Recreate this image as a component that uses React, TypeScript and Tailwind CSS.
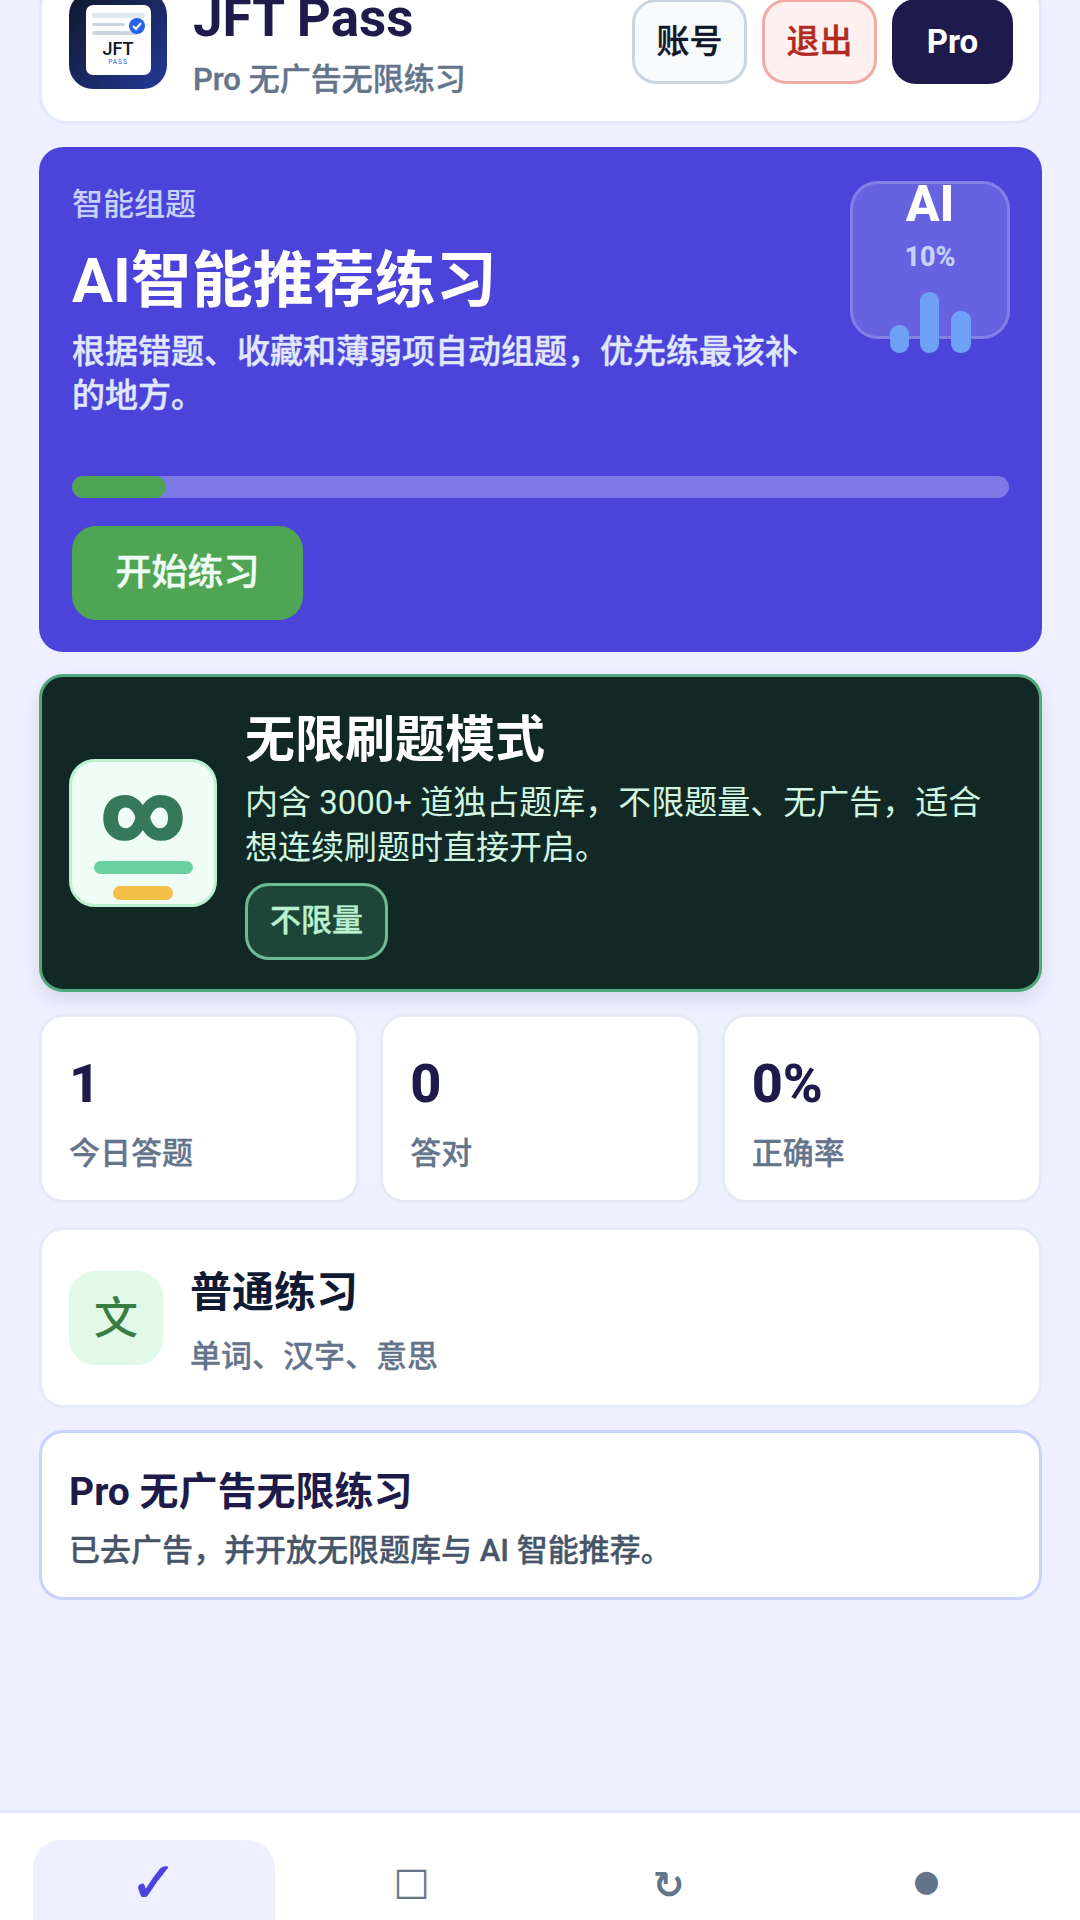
import React from "react";

function Logo() {
  return (
    <div className="relative w-[98px] h-[98px] shrink-0 rounded-[24px] bg-gradient-to-br from-[#0f172a] to-[#25399a] flex items-center justify-center">
      <svg width="65" height="70" viewBox="0 0 65 70">
        <rect width="65" height="70" rx="7" fill="#fff" />
        <rect x="6" y="8" width="53" height="5" rx="2" fill="#e2e8f0" />
        <rect x="6" y="18" width="33" height="3" rx="1.5" fill="#cbd5e1" />
        <rect x="6" y="26" width="46" height="4" rx="2" fill="#cbd5e1" />
        <circle cx="51" cy="21" r="8" fill="#2563eb" />
        <path d="M47 21l3 3 5-6" stroke="#fff" strokeWidth="2" fill="none" />
        <text x="32" y="50" textAnchor="middle" fontSize="18" fontWeight="500" fill="#0f172a" fontFamily="Roboto">JFT</text>
        <text x="32" y="59" textAnchor="middle" fontSize="6.5" letterSpacing="1" fill="#2563eb" fontFamily="Roboto">PASS</text>
      </svg>
    </div>
  );
}

function Stat({ n, l }: { n: string; l: string }) {
  return (
    <div className="flex-1 h-[189px] rounded-[24px] border-[3px] border-[#e6eaf6] bg-white px-[27px] pt-[36px]">
      <div className="text-[54px] leading-[62px] font-extrabold text-[#1e1b4b]">{n}</div>
      <div className="mt-[18px] text-[31px] leading-[42px] font-medium text-[#64748b] [-webkit-text-stroke:0.3px_currentColor]">{l}</div>
    </div>
  );
}

export default function App() {
  return (
    <div className="h-[1920px] overflow-hidden bg-[#eef0ff] flex flex-col font-['Roboto','Noto_Sans_CJK_SC',sans-serif]">
      <main className="flex-1 pl-[39px] pr-[38px] flex flex-col gap-[22px] -mt-[20px]">
        <section className="h-[144px] shrink-0 rounded-[28px] border-[3px] border-[#e3e8fd] bg-white pl-[27px] pr-[26px] flex items-start">
          <div className="mt-[8px] flex items-start">
            <Logo />
            <div className="ml-[26px] -mt-[3px]">
              <div className="text-[53px] leading-[60px] font-bold text-[#1e1b4b]">JFT Pass</div>
              <div className="mt-[11px] text-[31px] leading-[42px] font-medium text-[#64748b] [-webkit-text-stroke:0.4px_currentColor]">Pro 无广告无限练习</div>
            </div>
          </div>
          <div className="ml-auto mt-[16px] flex gap-[15px]">
            <div className="w-[115px] h-[85px] rounded-[24px] border-[3px] border-[#cbd5e1] bg-[#f8fafc] flex items-center justify-center text-[33px] font-medium text-[#0f172a] [-webkit-text-stroke:0.4px_currentColor]">账号</div>
            <div className="w-[115px] h-[85px] rounded-[24px] border-[3px] border-[#f2aaa5] bg-[#fdf0ef] flex items-center justify-center text-[33px] font-medium text-[#b02a22] [-webkit-text-stroke:0.4px_currentColor]">退出</div>
            <div className="w-[121px] h-[85px] rounded-[24px] bg-[#1e1b4b] flex items-center justify-center text-[33px] font-bold text-white">Pro</div>
          </div>
        </section>

        <section className="relative mt-px h-[505px] shrink-0 rounded-[24px] bg-[#4c44da] px-[33px] pt-[36px]">
          <div className="text-[31px] leading-[44px] font-medium text-[#c7d2fe]">智能组题</div>
          <div className="mt-[16px] text-[61px] leading-[76px] font-bold text-white">AI智能推荐练习</div>
          <div className="mt-[11px] w-[740px] text-[33px] leading-[44px] font-medium text-[#e0e7ff] [-webkit-text-stroke:0.4px_currentColor]">根据错题、收藏和薄弱项自动组题，优先练最该补的地方。</div>
          <div className="mt-[58px] h-[22px] rounded-full bg-[#7f79e8] overflow-hidden">
            <div className="h-full rounded-full bg-[#4fa553]" style={{ width: "10%" }} />
          </div>
          <div className="mt-[28px] w-[231px] h-[94px] rounded-[24px] bg-[#4fa553] flex items-center justify-center text-[36px] font-medium text-[#f0fdf4] [-webkit-text-stroke:0.4px_currentColor]">开始练习</div>

          <div className="absolute left-[811px] top-[34px] w-[160px] h-[158px] rounded-[28px] border-[3px] border-[#8480e6] bg-[#6662e0] flex flex-col items-center">
            <div className="-mt-[8px] text-[50px] leading-[56px] font-extrabold text-white">AI</div>
            <div className="mt-[9px] text-[27px] leading-[32px] font-extrabold text-[#c7d2fe]">10%</div>
            <div className="absolute left-[37px] top-[141px] w-[19px] h-[28px] rounded-[9px] bg-[#6ea0f5]" />
            <div className="absolute left-[67px] top-[108px] w-[19px] h-[61px] rounded-[9px] bg-[#6ea0f5]" />
            <div className="absolute left-[98px] top-[127px] w-[20px] h-[42px] rounded-[9px] bg-[#6ea0f5]" />
          </div>
        </section>

        <section className="h-[318px] shrink-0 rounded-[24px] border-[3px] border-[#4fa97a] bg-[#122825] shadow-[0_8px_16px_rgba(15,23,42,0.1)] pl-[27px] flex items-center gap-[28px]">
          <div className="w-[148px] h-[148px] shrink-0 rounded-[26px] border-[3px] border-[#bbf0d0] bg-[#f0fdf6] flex flex-col items-center">
            <div className="mt-[20px] h-[60px] w-full flex items-center justify-center text-[80px] leading-[60px] font-black text-[#35795a] [-webkit-text-stroke:2px_currentColor]">∞</div>
            <div className="mt-[19px] w-[99px] h-[13px] rounded-full bg-[#6ad0a0]" />
            <div className="mt-[12px] w-[60px] h-[14px] rounded-full bg-[#f2c048]" />
          </div>
          <div className="flex-1 pr-[30px]">
            <div className="mt-[2px] text-[50px] leading-[64px] font-bold text-white">无限刷题模式</div>
            <div className="mt-[8px] text-[33px] leading-[45px] text-[#d1f5e0]">内含 3000+ 道独占题库，不限题量、无广告，适合想连续刷题时直接开启。</div>
            <div className="mt-[13px] w-[143px] h-[77px] rounded-[24px] border-[3px] border-[#6dbb95] bg-[#1e4638] flex items-center justify-center text-[31px] font-medium text-[#bbf0d0] [-webkit-text-stroke:0.4px_currentColor]">不限量</div>
          </div>
        </section>

        <section className="shrink-0 flex gap-[21px]">
          <Stat n="1" l="今日答题" />
          <Stat n="0" l="答对" />
          <Stat n="0%" l="正确率" />
        </section>

        <section className="mt-[2px] h-[181px] shrink-0 rounded-[24px] border-[3px] border-[#e6eaf6] bg-white pl-[27px] flex items-center gap-[27px]">
          <div className="w-[94px] h-[94px] rounded-[26px] bg-[#e2f9e8] flex items-center justify-center pt-[3px] text-[44px] font-medium text-[#3a7d44]">文</div>
          <div className="pt-[12px]">
            <div className="-mt-[3px] text-[42px] leading-[54px] font-bold text-[#111a33]">普通练习</div>
            <div className="mt-[16px] text-[31px] leading-[42px] font-medium text-[#64748b] [-webkit-text-stroke:0.3px_currentColor]">单词、汉字、意思</div>
          </div>
        </section>

        <section className="h-[170px] shrink-0 rounded-[24px] border-[3px] border-[#c7d2fe] bg-white px-[27px] pt-[34px]">
          <div className="text-[39px] leading-[50px] font-bold text-[#1e1b4b]">Pro 无广告无限练习</div>
          <div className="mt-[13px] text-[31px] leading-[42px] font-medium text-[#475569] [-webkit-text-stroke:0.3px_currentColor]">已去广告，并开放无限题库与 AI 智能推荐。</div>
        </section>
      </main>

      <nav className="h-[110px] shrink-0 border-t-[3px] border-[#e3e8fd] bg-white px-[33px] pt-[27px] flex gap-[16px] overflow-hidden font-['DejaVu_Sans']">
        <div className="flex-1 h-[120px] rounded-t-[28px] bg-[#eef0ff] pt-[8px] text-center text-[56px] leading-[70px] font-bold text-[#4c44da] [-webkit-text-stroke:1px_currentColor]">✓</div>
        <div className="flex-1 text-center pt-[6px] text-[38px] leading-[70px] font-bold text-[#64748b]">□</div>
        <div className="flex-1 text-center pt-[10px] text-[38px] leading-[70px] font-bold text-[#64748b]">↻</div>
        <div className="flex-1 text-center pt-[6px] text-[30px] leading-[70px] font-bold text-[#64748b]">●</div>
      </nav>
    </div>
  );
}
